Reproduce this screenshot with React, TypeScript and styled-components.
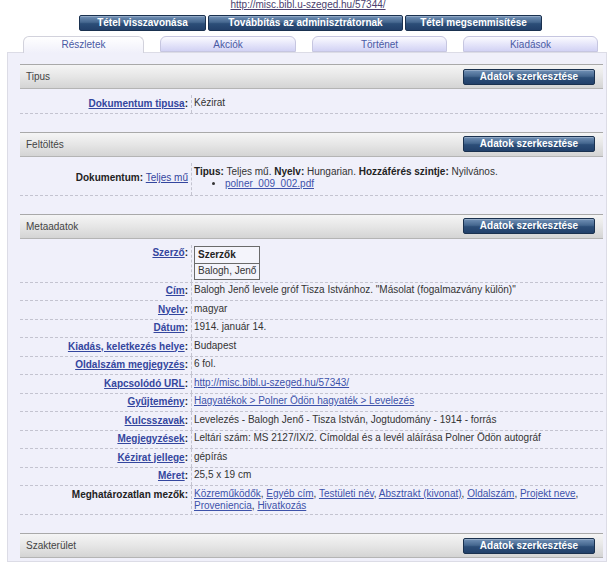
import React from "react";
import styled, { createGlobalStyle } from "styled-components";

const GlobalStyle = createGlobalStyle`
  html, body { margin: 0; padding: 0; background: #ffffff; }
  body {
    font-family: "Liberation Sans", Arial, sans-serif;
    font-size: 10px;
    color: #333;
  }
`;

const Page = styled.div`
  width: 616px;
  height: 569px;
  overflow: hidden;
`;

const UrlLine = styled.div`
  margin-top: -2px;
  height: 13px;
  line-height: 13px;
  text-align: center;
`;

const TopLink = styled.a`
  color: #4b3f6e;
  text-decoration: underline;
`;

const ButtonRow = styled.div`
  display: flex;
  justify-content: center;
  gap: 2px;
  margin-top: 4px;
  padding-left: 5px;
`;

const DarkButton = styled.button<{ $w?: number }>`
  box-sizing: border-box;
  height: 16px;
  ${(p) => (p.$w ? `width: ${p.$w}px;` : "")}
  padding: 0 8px;
  border: 1px solid #1a314f;
  border-radius: 2px;
  background: linear-gradient(#7291b6 0%, #45678f 45%, #2c4e78 55%, #22406a 100%);
  box-shadow: inset 0 1px 0 rgba(255, 255, 255, 0.25);
  color: #ffffff;
  font-family: "Liberation Sans", Arial, sans-serif;
  font-size: 10px;
  font-weight: bold;
  line-height: 14px;
  text-align: center;
  white-space: nowrap;
  cursor: pointer;
`;

const TabRow = styled.div`
  display: flex;
  align-items: flex-end;
  gap: 16px;
  margin-top: 5px;
  padding-left: 23px;
  height: 16px;
  position: relative;
  z-index: 1;
`;

const Tab = styled.div<{ $w: number; $active?: boolean }>`
  box-sizing: border-box;
  width: ${(p) => p.$w}px;
  height: ${(p) => (p.$active ? 17 : 16)}px;
  margin-bottom: ${(p) => (p.$active ? -1 : 0)}px;
  border: 1px solid ${(p) => (p.$active ? "#d2d2dc" : "#c6c6e0")};
  border-bottom: ${(p) => (p.$active ? "none" : "1px solid #c6c6e0")};
  border-radius: 6px 6px 0 0;
  background: ${(p) =>
    p.$active
      ? "linear-gradient(#ffffff, #f0f0fa)"
      : "linear-gradient(#fbfbff 0%, #e6e6fa 50%, #d2d2f4 100%)"};
  color: #4a5aa4;
  font-size: 10px;
  line-height: 15px;
  text-align: center;
`;

const Panel = styled.div`
  box-sizing: border-box;
  margin-left: 7px;
  width: 600px;
  border: 1px solid #dcdce6;
  background: #f0f0fa;
  padding: 11px 3px 3px 12px;
`;

const Section = styled.section<{ $last?: boolean }>`
  margin-bottom: ${(p) => (p.$last ? 0 : 18)}px;
`;

const SectionHeader = styled.div`
  box-sizing: border-box;
  height: 25px;
  display: flex;
  align-items: center;
  justify-content: space-between;
  padding: 0 8px 0 6px;
  border-top: 1px solid #a9a9a9;
  border-bottom: 1px solid #b4b4b4;
  background: linear-gradient(#f5f5f5 0%, #e6e6e6 50%, #d4d4d4 100%);
  color: #444;
  font-size: 10px;
`;

const Rows = styled.div`
  margin-top: 6px;
`;

const Row = styled.div`
  display: grid;
  grid-template-columns: 171px 1fr;
  border-bottom: 1px dashed #c4c4d0;
  line-height: 12.5px;
`;

const Label = styled.div<{ $valign?: "top" | "middle" }>`
  align-self: ${(p) => (p.$valign === "middle" ? "center" : "start")};
  padding: 2.5px 3px 2.5px 0;
  text-align: right;
  font-weight: bold;
  color: #222;
  white-space: nowrap;
`;

const Value = styled.div<{ $pad?: string }>`
  border-left: 1px dashed #c4c4d0;
  padding: ${(p) => p.$pad || "1.5px 2px"};
  color: #333;
`;

const LabelLink = styled.a<{ $plain?: boolean }>`
  color: #34469e;
  font-weight: ${(p) => (p.$plain ? "normal" : "bold")};
  text-decoration: underline;
`;

const ValueLink = styled.a`
  color: #3d52aa;
  text-decoration: underline;
`;

const FileList = styled.ul`
  margin: 0;
  padding-left: 31px;
  list-style: disc;
`;

const AuthorTable = styled.table`
  border-collapse: collapse;
  border: 1px solid #555;
  background: #f4f4fb;
  font-size: 10px;
  line-height: 12.5px;
`;

const AuthorCell = styled.td<{ $head?: boolean }>`
  border: 1px solid #6a6a6a;
  padding: 1.5px 3px;
  font-weight: ${(p) => (p.$head ? "bold" : "normal")};
  color: ${(p) => (p.$head ? "#222" : "#333")};
  white-space: nowrap;
`;

const B = styled.b`
  color: #222;
`;

type Field = { label: string; value: React.ReactNode };

const metaRows: Field[] = [
  { label: "Cím", value: 'Balogh Jenő levele gróf Tisza Istvánhoz. "Másolat (fogalmazvány külön)"' },
  { label: "Nyelv", value: "magyar" },
  { label: "Dátum", value: "1914. január 14." },
  { label: "Kiadás, keletkezés helye", value: "Budapest" },
  { label: "Oldalszám megjegyzés", value: "6 fol." },
  { label: "Kapcsolódó URL", value: <ValueLink href="#">http://misc.bibl.u-szeged.hu/57343/</ValueLink> },
  { label: "Gyűjtemény", value: <ValueLink href="#">Hagyatékok &gt; Polner Ödön hagyaték &gt; Levelezés</ValueLink> },
  { label: "Kulcsszavak", value: "Levelezés - Balogh Jenő - Tisza István, Jogtudomány - 1914 - forrás" },
  { label: "Megjegyzések", value: "Leltári szám: MS 2127/IX/2. Címoldal és a levél aláírása Polner Ödön autográf" },
  { label: "Kézirat jellege", value: "gépírás" },
  { label: "Méret", value: "25,5 x 19 cm" },
];

const undefinedFields = [
  "Közreműködők",
  "Egyéb cím",
  "Testületi név",
  "Absztrakt (kivonat)",
  "Oldalszám",
  "Projekt neve",
  "Proveniencia",
  "Hivatkozás",
];

const EditButton = () => <DarkButton $w={132}>Adatok szerkesztése</DarkButton>;

const Header = ({ title, edit = true }: { title: string; edit?: boolean }) => (
  <SectionHeader>
    <span>{title}</span>
    {edit && <EditButton />}
  </SectionHeader>
);

export default function App() {
  return (
    <Page>
      <GlobalStyle />
      <UrlLine>
        <TopLink href="#">http://misc.bibl.u-szeged.hu/57344/</TopLink>
      </UrlLine>
      <ButtonRow>
        <DarkButton $w={127}>Tétel visszavonása</DarkButton>
        <DarkButton $w={195}>Továbbítás az adminisztrátornak</DarkButton>
        <DarkButton $w={137}>Tétel megsemmisítése</DarkButton>
      </ButtonRow>
      <TabRow>
        <Tab $w={121} $active>Részletek</Tab>
        <Tab $w={136}>Akciók</Tab>
        <Tab $w={135}>Történet</Tab>
        <Tab $w={135}>Kiadások</Tab>
      </TabRow>
      <Panel>
        <Section>
          <Header title="Tipus" />
          <Rows>
            <Row>
              <Label>
                <LabelLink href="#">Dokumentum tipusa</LabelLink>:
              </Label>
              <Value>Kézirat</Value>
            </Row>
          </Rows>
        </Section>

        <Section>
          <Header title="Feltöltés" />
          <Rows>
            <Row>
              <Label $valign="middle">
                Dokumentum: <LabelLink href="#" $plain>Teljes mű</LabelLink>
              </Label>
              <Value $pad="3px 2px 4px">
                <B>Tipus:</B> Teljes mű. <B>Nyelv:</B> Hungarian. <B>Hozzáférés szintje:</B> Nyilvános.
                <FileList>
                  <li>
                    <ValueLink href="#">polner_009_002.pdf</ValueLink>
                  </li>
                </FileList>
              </Value>
            </Row>
          </Rows>
        </Section>

        <Section>
          <Header title="Metaadatok" />
          <Rows>
            <Row>
              <Label>
                <LabelLink href="#">Szerző</LabelLink>:
              </Label>
              <Value>
                <AuthorTable>
                  <tbody>
                    <tr>
                      <AuthorCell $head>Szerzők</AuthorCell>
                    </tr>
                    <tr>
                      <AuthorCell>Balogh, Jenő</AuthorCell>
                    </tr>
                  </tbody>
                </AuthorTable>
              </Value>
            </Row>
            {metaRows.map((r) => (
              <Row key={r.label}>
                <Label>
                  <LabelLink href="#">{r.label}</LabelLink>:
                </Label>
                <Value>{r.value}</Value>
              </Row>
            ))}
            <Row>
              <Label>Meghatározatlan mezők:</Label>
              <Value>
                {undefinedFields.map((f, i) => (
                  <React.Fragment key={f}>
                    <ValueLink href="#">{f}</ValueLink>
                    {i < undefinedFields.length - 1 ? ", " : ""}
                  </React.Fragment>
                ))}
              </Value>
            </Row>
          </Rows>
        </Section>

        <Section $last>
          <Header title="Szakterület" />
        </Section>
      </Panel>
    </Page>
  );
}
